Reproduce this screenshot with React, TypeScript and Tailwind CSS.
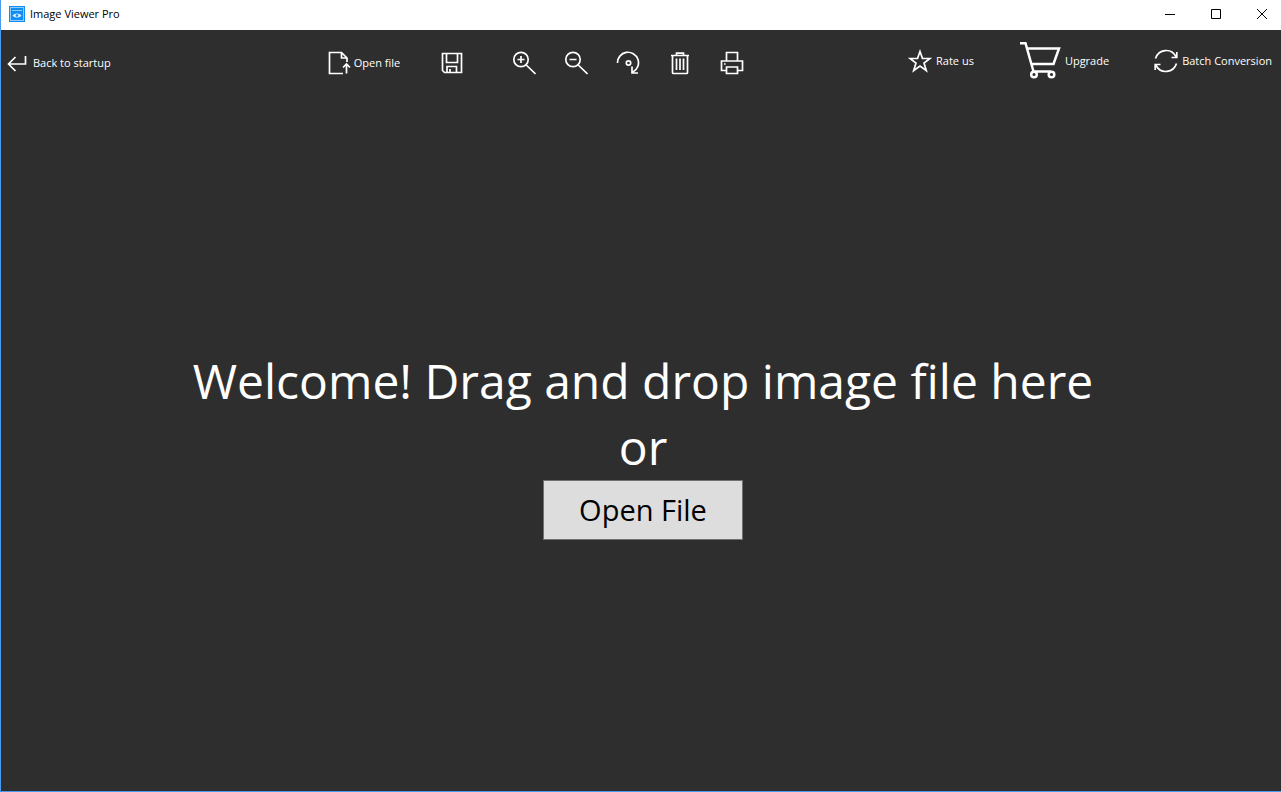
import type { ReactNode } from 'react';

type IconProps = { children: ReactNode; className?: string };

function Icon({ children, className = 'size-6' }: IconProps) {
  return (
    <svg
      viewBox="0 0 24 24"
      fill="none"
      stroke="currentColor"
      strokeWidth="1.7"
      aria-hidden="true"
      className={`shrink-0 ${className}`}
    >
      {children}
    </svg>
  );
}

function AppLogo() {
  return (
    <svg viewBox="0 0 16 16" className="size-4 shrink-0" aria-hidden="true">
      <rect width="16" height="16" fill="#0f8df2" />
      <rect x="1.5" y="1.5" width="13" height="13" fill="none" stroke="#8fcbfa" />
      <path d="M3 4.5h10" stroke="#8fcbfa" />
      <path d="M3.5 9.5C5.5 6.8 10.5 6.8 12.5 9.5C10.5 12.2 5.5 12.2 3.5 9.5Z" fill="#d9eefe" />
      <circle cx="8" cy="9.5" r="1.3" fill="#0f8df2" />
    </svg>
  );
}

const tools = [
  {
    label: 'Zoom in',
    icon: (
      <>
        <circle cx="9" cy="8.5" r="7.2" />
        <path d="M14.2 14L23.5 23M5.5 8.5h7M9 5v7" />
      </>
    ),
  },
  {
    label: 'Zoom out',
    icon: (
      <>
        <circle cx="9" cy="8.5" r="7.2" />
        <path d="M14.2 14L23.5 23M5.5 8.5h7" />
      </>
    ),
  },
  {
    label: 'Rotate',
    icon: (
      <>
        <path d="M1.5 12A10.5 10.5 0 1 1 17 21M16 15.5v6.5h6" />
        <circle cx="12.5" cy="12" r="2.2" />
      </>
    ),
  },
  {
    label: 'Delete',
    icon: (
      <path d="M3 4.5h18M8.5 4V2.2h7V4M4.5 4.5V21.5Q4.5 22.5 5.5 22.5H18.5Q19.5 22.5 19.5 21.5V4.5M8.5 7.5v11.5M12 7.5v11.5M15.5 7.5v11.5" />
    ),
  },
  {
    label: 'Print',
    icon: (
      <>
        <path d="M6.5 10V1.5h11V10M6.5 19.5H1.5V10H22.5V19.5H17.5" />
        <path d="M6.5 16h11v6.5h-11z" />
        <path d="M4 13h1.6" />
      </>
    ),
  },
];

export default function App() {
  return (
    <div className="flex h-screen flex-col border-b border-l border-[#4a9bf0] bg-[#2e2e2e] font-['Open_Sans','Noto_Sans',sans-serif] text-white">
      <header className="flex h-[30px] shrink-0 items-center gap-2 bg-white pb-[2px] pl-2 text-black">
        <div className="flex flex-1 items-center gap-[5px]">
          <AppLogo />
          <h1 className="text-[11px]">Image Viewer Pro</h1>
        </div>
        <button aria-label="Minimize" className="flex h-full w-[38px] items-center justify-center">
          <svg viewBox="0 0 10 10" className="size-[10px]" stroke="currentColor">
            <path d="M0 5.5h10" />
          </svg>
        </button>
        <button aria-label="Maximize" className="flex h-full w-[38px] items-center justify-center">
          <svg viewBox="0 0 10 10" className="size-[10px]" fill="none" stroke="currentColor">
            <path d="M0.5 0.5h9v9h-9z" />
          </svg>
        </button>
        <button aria-label="Close" className="flex h-full w-[38px] items-center justify-center">
          <svg viewBox="0 0 10 10" className="size-[10px]" stroke="currentColor">
            <path d="M0 0L10 10M10 0L0 10" />
          </svg>
        </button>
      </header>

      <nav className="flex h-[66px] shrink-0 items-center pr-[9px] pl-1 text-[11px]">
        <div className="w-1/4">
          <button className="flex items-center gap-1">
            <Icon>
              <path d="M20.5 5v8H4M10.5 6L3.5 13L10.5 20" />
            </Icon>
            Back to startup
          </button>
        </div>

        <div className="flex flex-1 items-center">
          <button className="flex items-center gap-[2px] pl-[6px]">
            <Icon>
              <path d="M15 22.5H1.5V1.5H13.5L19 7V11M13.5 1.5V7H19" />
              <path d="M18.5 22.5V13.5M15 16.5L18.5 13L22 16.5" />
            </Icon>
            Open file
          </button>
          <button aria-label="Save" className="ml-[26px] flex w-[52px] justify-center">
            <Icon>
              <path d="M2.5 2.5h19v19H4.5l-2-2zM6.5 2.5v9h11v-9M7 21.5v-6h9.5v6M10 18v3.5" />
            </Icon>
          </button>
          <div className="ml-5 flex">
            {tools.map((tool) => (
              <button key={tool.label} aria-label={tool.label} className="flex w-[52px] justify-center">
                <Icon>{tool.icon}</Icon>
              </button>
            ))}
          </div>
        </div>

        <div className="flex items-center gap-[45px] pb-1">
          <button className="flex items-center gap-1">
            <Icon>
              <path d="M12 2.5L14.5 9.5H22L16 14L18.3 21.5L12 17L5.7 21.5L8 14L2 9.5H9.5Z" />
            </Icon>
            Rate us
          </button>
          <button className="flex items-center gap-1">
            <svg
              viewBox="0 0 42 40"
              className="h-10 w-[42px] shrink-0"
              fill="none"
              stroke="currentColor"
              strokeWidth="2.5"
              aria-hidden="true"
            >
              <path d="M1 2.2H6.5L14.5 30.5M8.5 7.5H40L34.5 23H12.5M14 30.5H32" />
              <circle cx="15" cy="33.5" r="2.8" />
              <circle cx="32.5" cy="33.5" r="2.8" />
            </svg>
            Upgrade
          </button>
          <button className="flex items-center gap-1">
            <Icon>
              <path d="M1.5 9.5C4.5 0 17 -1.5 22 7.5M22.8 3V8.5H17.5M22.5 14.5C19.5 24 7 25.5 2 16.5M1.2 21V15.5H6.5" />
            </Icon>
            Batch Conversion
          </button>
        </div>
      </nav>

      <main className="flex flex-1 flex-col items-center justify-center pl-1">
        <p className="text-center text-[48px] leading-[66px]">
          Welcome! Drag and drop image file here
          <br />
          or
        </p>
        <button className="h-[60px] w-[200px] border border-[#707070] bg-[#dddddd] text-[29px] text-black">
          Open File
        </button>
      </main>
    </div>
  );
}
